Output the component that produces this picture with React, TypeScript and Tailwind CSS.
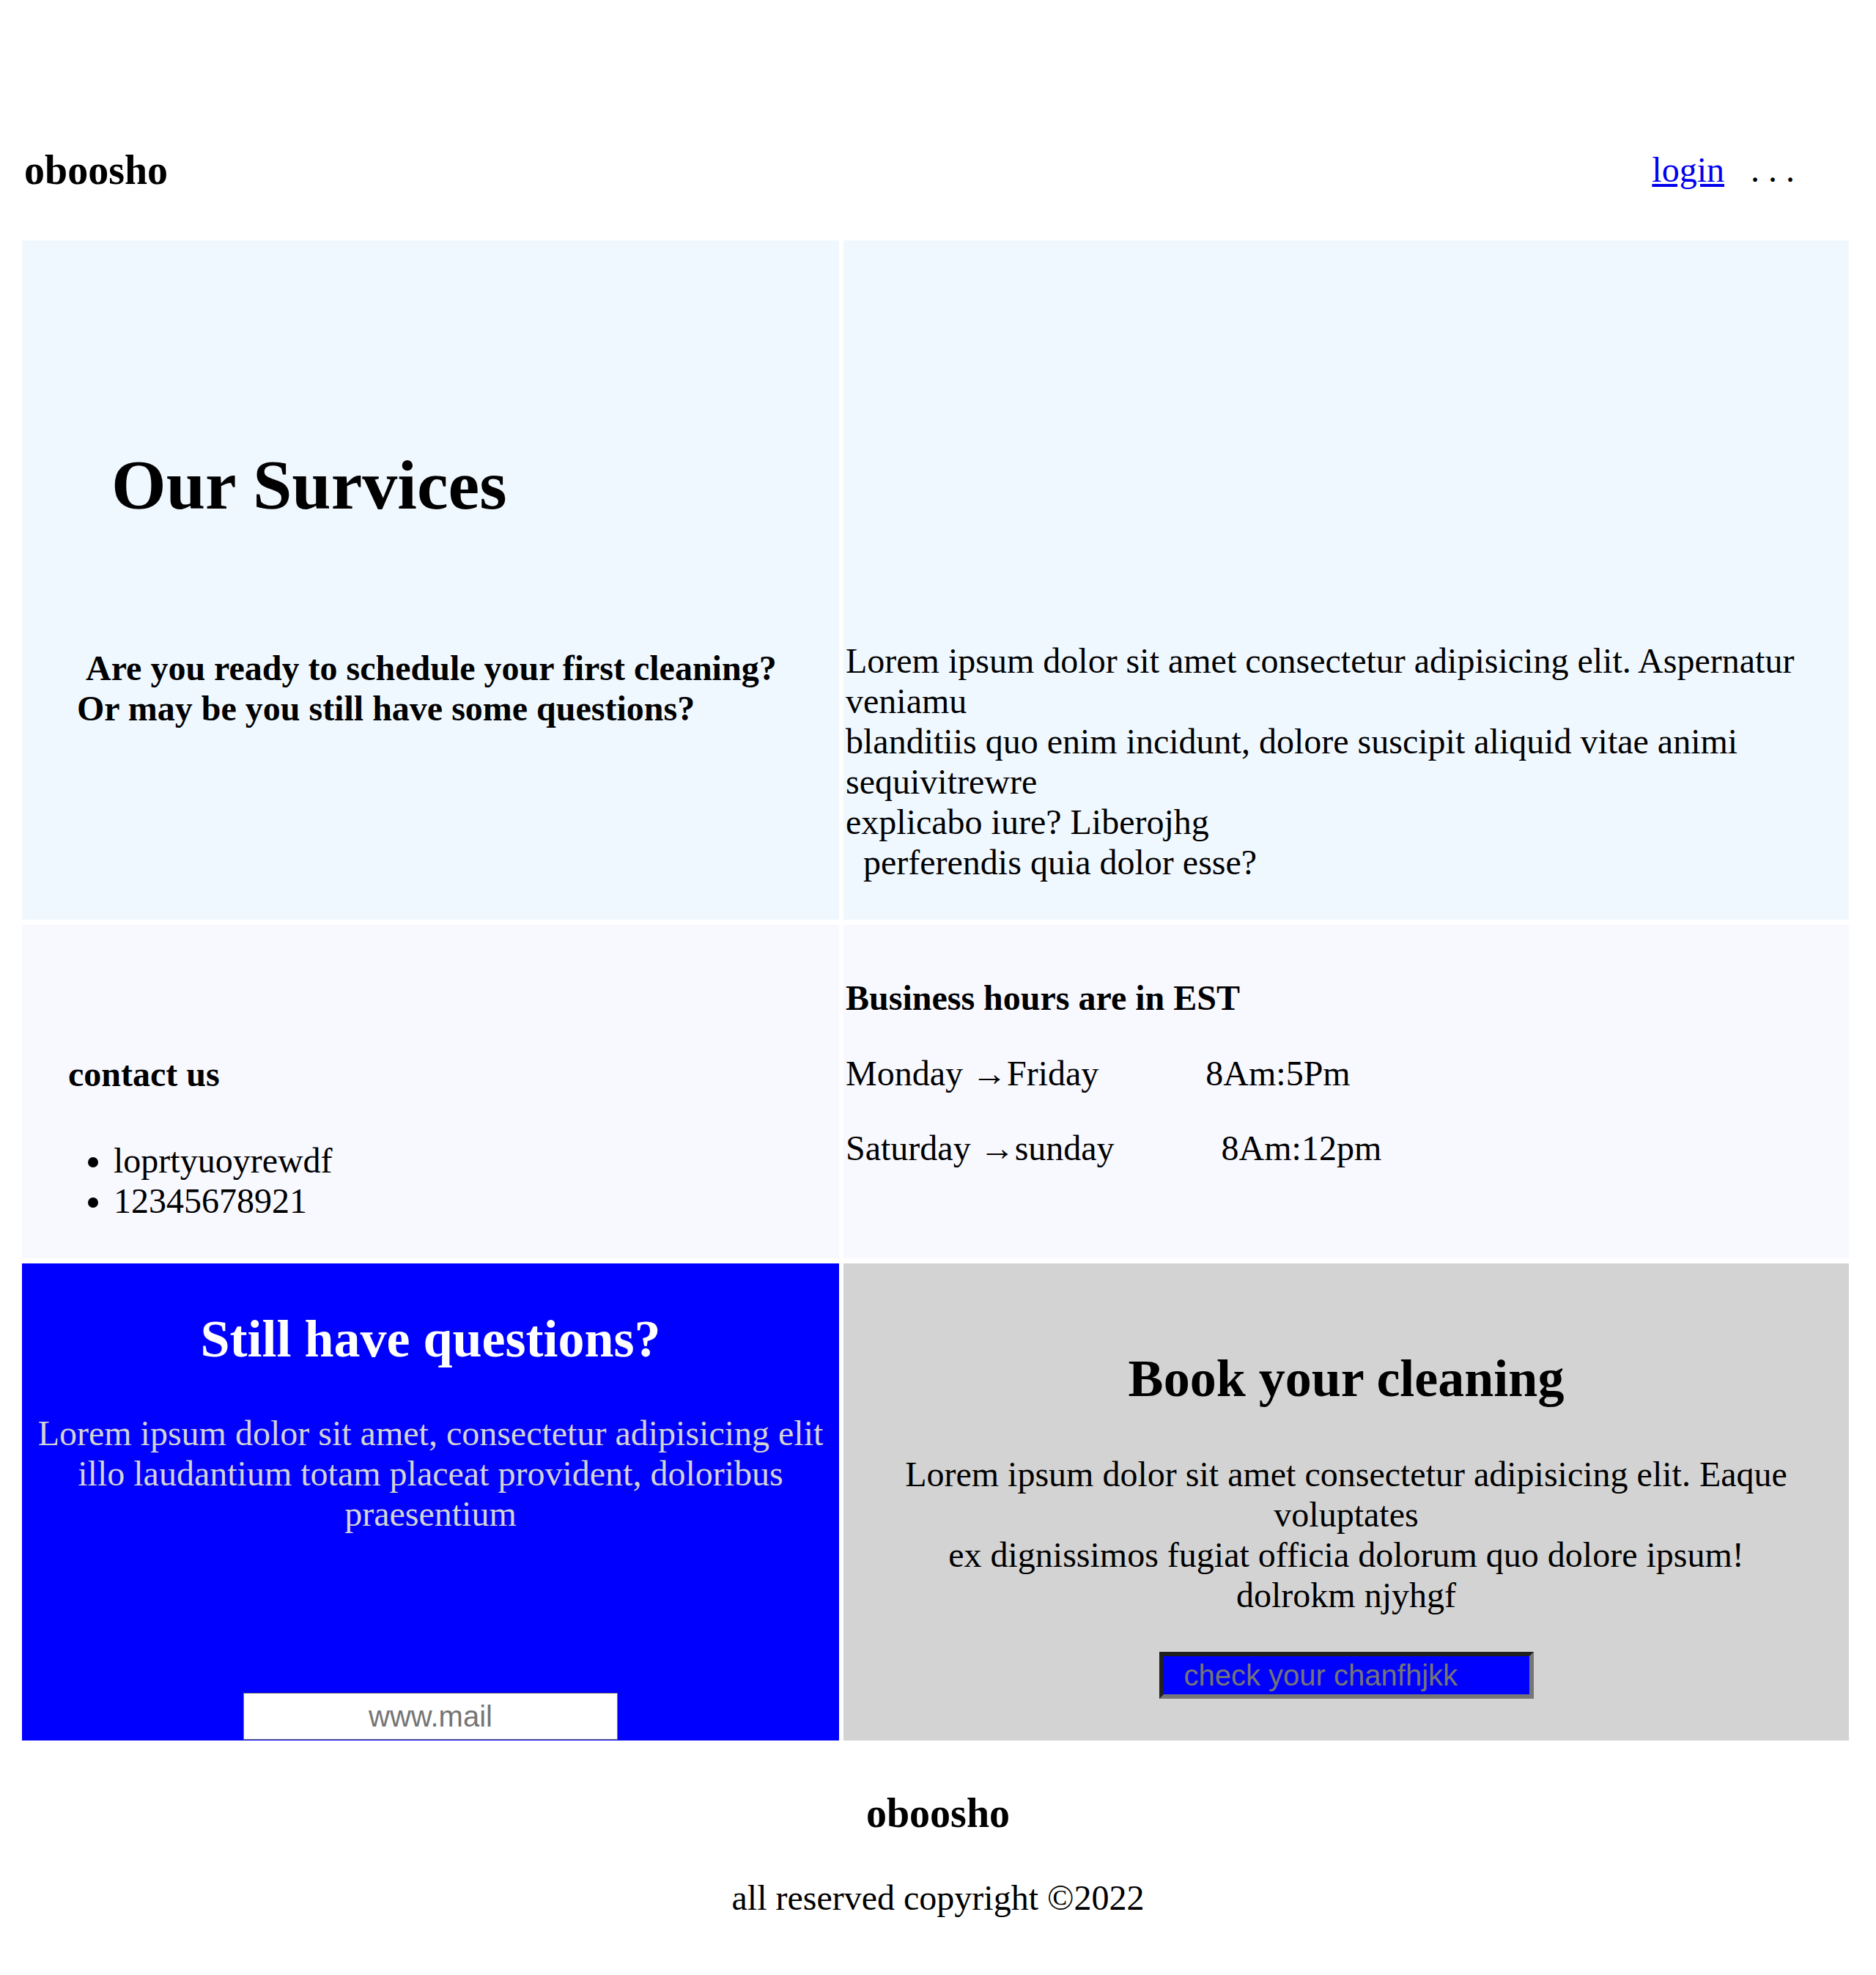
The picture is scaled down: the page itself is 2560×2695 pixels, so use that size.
const contacts = ["loprtyuoyrewdf", "12345678921"];

const hours = [
  { days: "Monday →Friday", time: "8Am:5Pm" },
  { days: "Saturday →sunday", time: "8Am:12pm" },
];

export default function App() {
  return (
    <div className="min-h-[2695px] bg-white font-['Liberation_Serif','Times_New_Roman',serif] text-[48px] leading-[55px] text-black">
      <div className="pl-[30px] pr-[37px]">
        {/* Header */}
        <header className="flex items-start justify-between pt-[200px] pb-[64px]">
          <h3 className="ml-[3px] text-[56px] font-bold leading-[64px]">oboosho</h3>
          <nav className="mt-[4px] mr-[74px] flex items-start gap-[36px]">
            <a href="#" className="text-[#0000ee] underline">
              login
            </a>
            <span>. . .</span>
          </nav>
        </header>

        <main className="flex flex-col gap-y-[7px]">
          {/* Services */}
          <section className="flex gap-x-[6px]">
            <div className="w-[1115px] shrink-0 bg-[#f0f8ff] pt-[279px]">
              <h1 className="pl-[122px] text-[96px] font-bold leading-[110px]">Our Survices</h1>
              <p className="mt-[167px] pl-[75px] font-bold">
                {"\u00a0"}Are you ready to schedule your first cleaning?
                <br />
                Or may be you still have some questions?
              </p>
            </div>
            <div className="flex-1 bg-[#f0f8ff] pt-[546px] pb-[51px] pl-[3px]">
              <p>
                Lorem ipsum dolor sit amet consectetur adipisicing elit. Aspernatur veniamu
                <br />
                blanditiis quo enim incidunt, dolore suscipit aliquid vitae animi sequivitrewre
                <br />
                explicabo iure? Liberojhg
                <br />
                {"\u00a0\u00a0"}perferendis quia dolor esse?
              </p>
            </div>
          </section>

          {/* Contact + hours */}
          <section className="flex gap-x-[6px]">
            <div className="w-[1115px] shrink-0 bg-[#f8f8ff] pt-[176px] pb-[51px] pl-[63px]">
              <h4 className="font-bold">contact us</h4>
              <ul className="mt-[63px] list-disc pl-[62px]">
                {contacts.map((c) => (
                  <li key={c}>{c}</li>
                ))}
              </ul>
            </div>
            <div className="flex flex-1 flex-col gap-y-[47.5px] bg-[#f8f8ff] pt-[72px] pl-[3px]">
              <p className="font-bold">Business hours are in EST</p>
              {hours.map((h) => (
                <p key={h.days}>
                  {h.days}
                  <span className="ml-[146px]">{h.time}</span>
                </p>
              ))}
            </div>
          </section>

          {/* Questions + booking */}
          <section className="flex gap-x-[6px]">
            <div className="flex w-[1115px] shrink-0 flex-col items-center bg-[#0000ff] pt-[62px] pb-[1px] text-center">
              <h2 className="text-[72px] font-bold leading-[83px] text-white">Still have questions?</h2>
              <p className="mt-[59px] text-[#d3d3d3]">
                Lorem ipsum dolor sit amet, consectetur adipisicing elit
                <br />
                illo laudantium totam placeat provident, doloribus
                <br />
                praesentium
              </p>
              <input
                type="text"
                placeholder="www.mail"
                className="mt-[217px] h-[64px] w-[511px] border border-[#767676] bg-white text-center font-['Liberation_Sans',Arial,sans-serif] text-[40px] text-black placeholder:text-[#757575]"
              />
            </div>
            <div className="flex flex-1 flex-col items-center bg-[#d3d3d3] pt-[116px] pb-[57px] text-center">
              <h2 className="text-[72px] font-bold leading-[83px]">Book your cleaning</h2>
              <p className="mt-[61px]">
                Lorem ipsum dolor sit amet consectetur adipisicing elit. Eaque
                <br />
                voluptates
                <br />
                ex dignissimos fugiat officia dolorum quo dolore ipsum!
                <br />
                dolrokm njyhgf
              </p>
              <button
                type="button"
                className="mt-[50px] h-[64px] w-[511px] border-[6px] border-t-[#202020] border-l-[#202020] border-r-[#767676] border-b-[#767676] bg-[#0000ff] pl-[28px] text-left font-['Liberation_Sans',Arial,sans-serif] text-[40px] leading-[46px] text-[#757575]"
              >
                check your chanfhjkk
              </button>
            </div>
          </section>
        </main>
      </div>

      {/* Footer */}
      <footer className="mt-[67px] pb-[78px] text-center">
        <h3 className="text-[56px] font-bold leading-[64px]">oboosho</h3>
        <p className="mt-[56px]">all reserved copyright ©2022</p>
      </footer>
    </div>
  );
}
